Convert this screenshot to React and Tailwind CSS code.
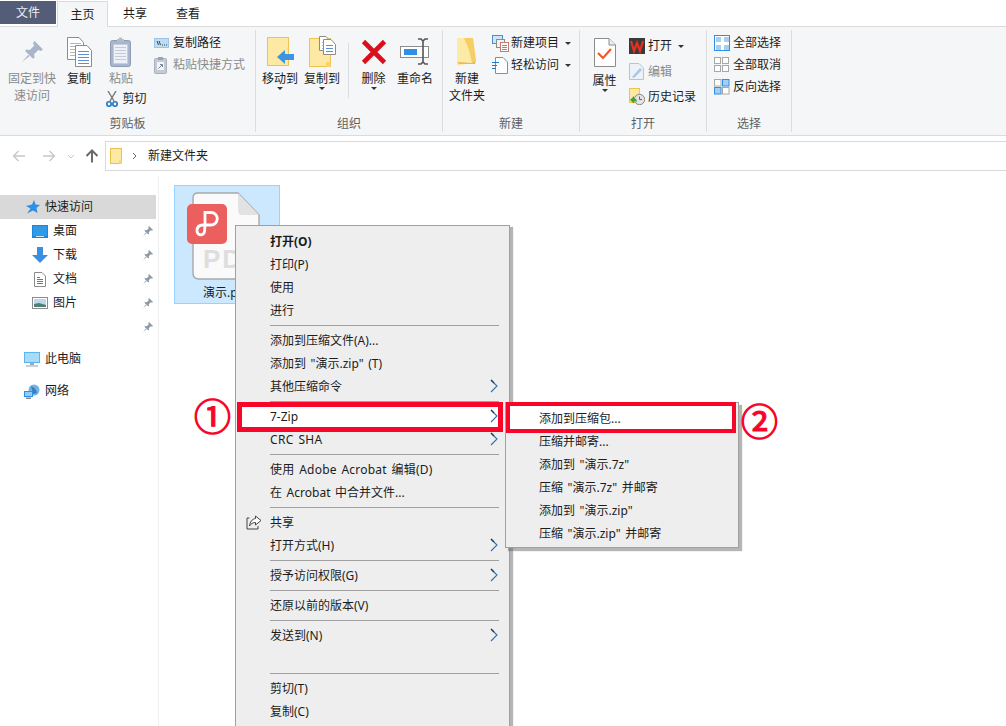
import React from "react";

const Pin = ({ className = "w-[20px] h-[20px]", fill = "#a9b5ca" }) => (
  <svg viewBox="0 0 20 20" className={className}>
    <path d="M12 0 L20 8 L18 9.5 L15.5 8.5 L11.5 12.5 L12 16 L10.5 17 L3 9.5 L4 8 L7.5 8.5 L11.5 4.5 L10.5 2 Z" fill={fill} />
    <path d="M6 13 L0 20 L7 14.5 Z" fill={fill} />
  </svg>
);

const Page = ({ x = 0, y = 0, w = 18, h = 23, lines = "#5b8fd6" }) => (
  <g>
    <path d={`M${x + .5} ${y + .5} H${x + w - 5} L${x + w - .5} ${y + 5.5} V${y + h - .5} H${x + .5} Z`} fill="#fff" stroke="#8c8c8c" />
    {[6, 9, 12, 15, 18].map((d) => d < h - 2 && <path key={d} d={`M${x + 3} ${y + d + .5} H${x + w - 3}`} stroke={lines} />)}
  </g>
);

const CopyIcon = () => (
  <svg width="25" height="30" viewBox="0 0 25 30">
    <Page x={0} y={0} w={17} h={23} lines="#b5b5b5" />
    <Page x={8} y={8} w={17} h={22} />
  </svg>
);

const PasteIcon = () => (
  <svg width="22" height="30" viewBox="0 0 22 30">
    <rect x=".5" y="3.5" width="20" height="26" rx="2" fill="#a9b5ca" stroke="#8f9cb5" />
    <rect x="3.5" y="7.5" width="14" height="19" fill="#eef1f7" stroke="#c5cddd" />
    {[10, 13, 16, 19, 22].map((d) => <path key={d} d={`M5 ${d + .5} H16`} stroke="#c3cbdb" />)}
    <path d="M7 4 V2 H9 V0.5 H12 V2 H14 V4.5 H7 Z" fill="#b5bccb" />
  </svg>
);

const Scissors = () => (
  <svg width="12" height="16" viewBox="0 0 12 16">
    <path d="M2 0 L8 10 M10 0 L4 10" stroke="#777" strokeWidth="1.4" fill="none" />
    <circle cx="3" cy="13" r="2.2" fill="none" stroke="#1e78c8" strokeWidth="1.6" />
    <circle cx="9" cy="13" r="2.2" fill="none" stroke="#1e78c8" strokeWidth="1.6" />
  </svg>
);

const PathIcon = () => (
  <svg width="15" height="10" viewBox="0 0 15 10">
    <rect x=".5" y=".5" width="14" height="9" fill="#bfdcf5" stroke="#9cc4e6" />
    <path d="M3 3 L4.5 7 M5 3 L6.5 7 M8 7 H9 M10 7 H11 M12 7 H13" stroke="#333" strokeWidth=".9" />
  </svg>
);

const ShortcutIcon = () => (
  <svg width="13" height="17" viewBox="0 0 13 17">
    <rect x=".5" y="1.5" width="12" height="15" rx="1" fill="#c3cad6" stroke="#a9b1bf" />
    <rect x="3" y="5" width="7" height="8" fill="#f3f4f6" />
    <path d="M4.5 11.5 L8 8 M6 7.5 H8.5 V10" stroke="#7a8494" fill="none" />
    <rect x="4" y="0" width="5" height="3" fill="#9aa3b2" />
  </svg>
);

const MoveIcon = () => (
  <svg width="27" height="30" viewBox="0 0 27 30">
    <rect x=".5" y=".5" width="21" height="28" fill="#fde9a3" stroke="#ecc44f" />
    <path d="M10 20 L18 13 V17 H27 V23 H18 V27 Z" fill="#3d94e0" />
  </svg>
);

const CopyToIcon = () => (
  <svg width="27" height="31" viewBox="0 0 27 31">
    <rect x=".5" y="2.5" width="21" height="28" fill="#fde9a3" stroke="#ecc44f" />
    <path d="M17 31 V26 H21.5 V31 Z" fill="#f6d56e" />
    <Page x={10} y={0} w={12} h={15} lines="#bbb" />
    <Page x={14} y={3} w={13} h={16} />
  </svg>
);

const DeleteIcon = () => (
  <svg width="26" height="26" viewBox="0 0 26 26">
    <path d="M2.5 2.5 L23.5 23.5 M23.5 2.5 L2.5 23.5" stroke="#d9101c" strokeWidth="4.6" />
  </svg>
);

const RenameIcon = () => (
  <svg width="30" height="27" viewBox="0 0 30 27">
    <rect x=".5" y="8.5" width="28" height="11" fill="#fff" stroke="#8c8c8c" />
    <rect x="4" y="11" width="13" height="6" fill="#2f8fe8" />
    <path d="M18 1 H21 L23 3 L25 1 H28 M23 3 V24 M18 26 H21 L23 24 L25 26 H28" stroke="#555" strokeWidth="1.6" fill="none" />
  </svg>
);

const NewFolderIcon = () => (
  <svg width="20" height="28" viewBox="0 0 20 28">
    <path d="M0 0 H9 L15 3 V25 L0 28 Z" fill="#fdeaa6" />
    <path d="M7 0 H16 L19 22 L15 25 L12 12 Z" fill="#f5cf66" />
    <path d="M0 24 L15 25 L19 22 L18 26 H2 Z" fill="#e6bc4f" />
  </svg>
);

const NewItemIcon = () => (
  <svg width="17" height="17" viewBox="0 0 17 17">
    <rect x=".5" y=".5" width="10" height="8" fill="#cfe5f7" stroke="#4f8fc9" />
    <rect x="4.5" y="4.5" width="8" height="8" fill="#f1f1f1" stroke="#8c8c8c" />
    <rect x="8.5" y="7.5" width="8" height="9" fill="#fff" stroke="#c77b6a" />
    <path d="M10 10.5 H15 M10 12.5 H15 M10 14.5 H15" stroke="#c77b6a" />
  </svg>
);

const EasyIcon = () => (
  <svg width="16" height="17" viewBox="0 0 16 17">
    <path d="M3.5 .5 H11 L15.5 5 V16.5 H3.5 Z" fill="#fff" stroke="#8c8c8c" />
    <path d="M0 5.5 H7 M0 8.5 H5 M0 11.5 H4" stroke="#1e78c8" strokeWidth="1.2" />
  </svg>
);

const PropsIcon = () => (
  <svg width="22" height="29" viewBox="0 0 22 29">
    <path d="M.5 .5 H15 L21.5 7 V28.5 H.5 Z" fill="#fff" stroke="#8c8c8c" />
    <path d="M15 .5 V7 H21.5" fill="#eee" stroke="#8c8c8c" />
    <path d="M4 15 L9 20 L17 11" stroke="#ef5a28" strokeWidth="2.2" fill="none" />
  </svg>
);

const WpsIcon = () => (
  <svg width="16" height="16" viewBox="0 0 16 16">
    <rect width="16" height="16" fill="#3a3a3a" />
    <path d="M2 3 L5 13 L8 5 L11 13 L14 3" stroke="#e8301e" strokeWidth="2.2" fill="none" />
  </svg>
);

const EditIcon = () => (
  <svg width="15" height="17" viewBox="0 0 15 17">
    <path d="M.5 .5 H10 L14.5 5 V16.5 H.5 Z" fill="#eef1f6" stroke="#b9c2d0" />
    <path d="M3 14 L11 5 L13 7 L5 15 Z" fill="#a9c6e6" />
  </svg>
);

const HistoryIcon = () => (
  <svg width="16" height="17" viewBox="0 0 16 17">
    <rect x=".5" y=".5" width="10" height="14" fill="#fde9a3" stroke="#ecc44f" />
    <circle cx="10.5" cy="11.5" r="5.2" fill="#e3e3e3" stroke="#888" />
    <path d="M10.5 8.5 V11.5 H13" stroke="#666" fill="none" />
    <path d="M1 12 L5 8 L5 10.5 C7 10.5 8 12 8 14 C7 13 6 13 5 13 L5 15.5 Z" fill="#3aa53a" />
  </svg>
);

const Grid4 = ({ mode }) => {
  const cells = [[0, 0], [8, 0], [0, 8], [8, 8]];
  return (
    <svg width="16" height="16" viewBox="0 0 16 16">
      {mode === "all" && <rect x=".5" y=".5" width="15" height="15" fill="#fff" stroke="#2f8fe8" />}
      {cells.map(([x, y], i) => {
        if (mode === "all") return <rect key={i} x={x + 2} y={y + 2} width="5" height="5" fill="#a6cef0" />;
        if (mode === "none") return <rect key={i} x={x + .5} y={y + .5} width="6" height="6" fill="#fff" stroke="#a8a8a8" />;
        const on = i === 1 || i === 2;
        return <rect key={i} x={x + .5} y={y + .5} width="6.5" height="6.5" fill={on ? "#a6cef0" : "#fff"} stroke={on ? "#2f8fe8" : "#a8a8a8"} />;
      })}
    </svg>
  );
};

const Caret = () => <span className="block w-0 h-0 border-x-[3px] border-x-transparent border-t-[3px] border-t-[#333]" />;

const Big = ({ w, icon, label, label2, caret, dim, ih = "h-[37px]" }) => (
  <div className={`${w} flex flex-col items-center shrink-0`}>
    <div className={`${ih} flex items-center justify-center`}>{icon}</div>
    <div className={`leading-[17px] text-center whitespace-nowrap ${dim ? "text-[#8a8a8a]" : ""}`}>{label}</div>
    {label2 && <div className={`leading-[17px] text-center whitespace-nowrap ${dim ? "text-[#8a8a8a]" : ""}`}>{label2}</div>}
    {caret && <div><Caret /></div>}
  </div>
);

const Small = ({ icon, label, caret, dim, h = "h-[22px]", iw = "w-[19px]" }) => (
  <div className={`${h} flex items-center whitespace-nowrap`}>
    <div className={`${iw} flex items-center shrink-0`}>{icon}</div>
    <span className={dim ? "text-[#8a8a8a]" : ""}>{label}</span>
    {caret && <span className="ml-[6px]"><Caret /></span>}
  </div>
);

const Group = ({ w, label, children }) => (
  <div className={`${w} shrink-0 h-[102px] flex flex-col border-r border-[#dcdddf]`}>
    <div className="flex-1 flex items-start pt-[3px]">{children}</div>
    <div className="h-[18px] leading-[20px] text-center text-[#5f5f5f]">{label}</div>
  </div>
);

const Ribbon = () => (
  <div className="h-[109px] bg-[#f5f6f7] border-b border-[#dadbdc] pt-[3px] flex">
    <Group w="w-[256px]" label="剪贴板">
      <div className="w-[6px]" />
      <Big w="w-[52px]" dim icon={<Pin className="w-[21px] h-[21px]" />} label="固定到快" label2="速访问" />
      <Big w="w-[42px]" icon={<CopyIcon />} label="复制" />
      <div className="w-[42px] flex flex-col items-center">
        <Big w="w-[42px]" dim icon={<PasteIcon />} label="粘贴" />
        <div className="flex items-center gap-[5px] h-[17px] mt-[3px] whitespace-nowrap ml-[10px]"><Scissors /><span>剪切</span></div>
      </div>
      <div className="ml-[12px] -mt-[1px] flex flex-col">
        <Small icon={<PathIcon />} label="复制路径" />
        <Small dim icon={<ShortcutIcon />} label="粘贴快捷方式" />
      </div>
    </Group>
    <Group w="w-[187px]" label="组织">
      <div className="w-[3px]" />
      <Big w="w-[42px]" icon={<MoveIcon />} label="移动到" caret />
      <Big w="w-[42px]" icon={<CopyToIcon />} label="复制到" caret />
      <div className="w-px h-[55px] mt-[10px] ml-[5px] mr-[4px] bg-[#dcdddf] shrink-0" />
      <Big w="w-[41px]" icon={<DeleteIcon />} label="删除" caret />
      <Big w="w-[42px]" icon={<RenameIcon />} label="重命名" />
    </Group>
    <Group w="w-[137px]" label="新建">
      <div className="w-[1px]" />
      <Big w="w-[46px]" icon={<NewFolderIcon />} label="新建" label2="文件夹" />
      <div className="ml-[2px] -mt-[1px] flex flex-col">
        <Small icon={<NewItemIcon />} label="新建项目" caret />
        <Small icon={<EasyIcon />} label="轻松访问" caret />
      </div>
    </Group>
    <Group w="w-[127px]" label="打开">
      <Big w="w-[49px]" ih="h-[39px]" icon={<PropsIcon />} label="属性" caret />
      <div className="flex flex-col">
        <Small h="h-[26px]" icon={<WpsIcon />} label="打开" caret />
        <Small h="h-[25px]" dim icon={<EditIcon />} label="编辑" />
        <Small h="h-[25px]" icon={<HistoryIcon />} label="历史记录" />
      </div>
    </Group>
    <Group w="w-[85px]" label="选择">
      <div className="ml-[7px] -mt-[1px] flex flex-col">
        <Small icon={<Grid4 mode="all" />} label="全部选择" />
        <Small icon={<Grid4 mode="none" />} label="全部取消" />
        <Small icon={<Grid4 mode="inv" />} label="反向选择" />
      </div>
    </Group>
  </div>
);

const Tabs = () => (
  <div className="h-[27px] flex border-b border-[#dadbdc] pt-px">
    <div className="w-[56px] h-[23px] bg-[#535d77] text-[#eceef3] flex items-center justify-center">文件</div>
    <div className="w-[51px] h-[26px] ml-px bg-[#f5f6f7] border-x border-t border-[#dadbdc] flex items-center justify-center">主页</div>
    <div className="w-[54px] h-[25px] flex items-center justify-center">共享</div>
    <div className="w-[52px] h-[25px] flex items-center justify-center">查看</div>
  </div>
);

const Arrow = ({ color, flip, sw = 1.4 }) => (
  <svg width="14" height="12" viewBox="0 0 14 12" className={flip ? "rotate-180" : ""}>
    <path d="M13 6 H1.5 M6.5 1 L1.5 6 L6.5 11" stroke={color} strokeWidth={sw} fill="none" />
  </svg>
);

const AddressBar = () => (
  <div className="h-[40px] flex items-center pl-[12px] pr-0">
    <Arrow color="#c8c8c8" />
    <div className="w-[16px]" />
    <Arrow color="#c8c8c8" flip />
    <svg width="8" height="5" viewBox="0 0 8 5" className="ml-[11px] shrink-0"><path d="M1 1 L4 4 L7 1" stroke="#c8c8c8" fill="none" /></svg>
    <svg width="14" height="14" viewBox="0 0 14 14" className="ml-[10px] shrink-0"><path d="M7 13.5 V1.5 M1.5 7 L7 1.5 L12.5 7" stroke="#6a6a6a" strokeWidth="2" fill="none" /></svg>
    <div className="ml-[6px] flex-1 h-[30px] border-y border-l border-[#d9d9d9] flex items-center pl-[4px]">
      <svg width="13" height="17" viewBox="0 0 13 17"><rect x=".5" y=".5" width="11" height="15" fill="#fde9a3" stroke="#e8c24a" /><path d="M9 16 V12.5 H12 V16 Z" fill="#f6d56e" /></svg>
      <svg width="6" height="8" viewBox="0 0 6 8" className="ml-[9px]"><path d="M1 1 L4 4 L1 7" stroke="#666" fill="none" /></svg>
      <span className="ml-[10px]">新建文件夹</span>
    </div>
  </div>
);

const StarIcon = () => (
  <svg width="14" height="14" viewBox="0 0 14 14">
    <path d="M8 0 L9.5 4.5 L14 5 L10.5 8 L11.5 13 L7 10.5 L1 13.5 L4.5 8.5 L0 6 L6 4.5 Z" fill="#2f8fe8" />
  </svg>
);
const DesktopIcon = () => (
  <svg width="16" height="13" viewBox="0 0 16 13"><rect width="16" height="13" fill="#1a86dc" /><rect x="1" y="1" width="14" height="10" fill="#2f9be8" /><path d="M4 11.5 H12" stroke="#cfe5f7" /></svg>
);
const DownIcon = () => (
  <svg width="16" height="16" viewBox="0 0 16 16"><path d="M5 0 H11 V8 H16 L8 16 L0 8 H5 Z" fill="#3a8fe0" /></svg>
);
const DocIcon = () => (
  <svg width="12" height="15" viewBox="0 0 12 15"><path d="M.5 .5 H8 L11.5 4 V14.5 H.5 Z" fill="#fff" stroke="#8c8c8c" /><path d="M3 5.5 H6 M3 7.5 H9 M3 9.5 H9 M3 11.5 H9" stroke="#3a8a9a" /></svg>
);
const PicIcon = () => (
  <svg width="16" height="12" viewBox="0 0 16 12"><rect x=".5" y=".5" width="15" height="11" fill="#fff" stroke="#8c8c8c" /><rect x="2" y="2" width="12" height="8" fill="#bcd8ea" /><path d="M2 10 L2 7 L7 6 L14 8 V10 Z" fill="#4f7f78" /></svg>
);
const PcIcon = () => (
  <svg width="16" height="15" viewBox="0 0 16 15"><rect width="16" height="11" fill="#5cb4ec" /><rect x="1" y="1" width="14" height="9" fill="#a6dcf8" /><rect x="6" y="11" width="4" height="2" fill="#9aa9b5" /><rect x="2" y="13" width="12" height="2" fill="#c7d0d8" /></svg>
);
const NetIcon = () => (
  <svg width="16" height="15" viewBox="0 0 16 15"><circle cx="10" cy="6" r="5.5" fill="#6fb4e8" /><path d="M7 2 C10 3 12 5 13 9 L9 10 Z" fill="#3c7db8" /><rect y="7" width="9" height="6" fill="#2f8fe8" /><rect x="1" y="8" width="7" height="4" fill="#8fcdf2" /><rect x="2" y="13.5" width="5" height="1.5" fill="#888" /></svg>
);

const NavItem = ({ icon, label }) => (
  <div className="h-[24px] flex items-center relative">
    <div className="w-[48px] pl-[32px] flex items-center justify-center shrink-0">{icon}</div>
    <span className="ml-[5px]">{label}</span>
    <div className="ml-auto mr-[5px]"><Pin className="w-[10px] h-[10px]" fill="#8f99a6" /></div>
  </div>
);

const Sidebar = () => (
  <div className="w-[159px] shrink-0 h-full border-r border-[#f0f0f0] pt-[19px]">
    <div className="w-[156px] h-[24px] bg-[#d9d9d9] flex items-center pl-[26px] gap-[5px]"><StarIcon /><span>快速访问</span></div>
    <div className="w-[158px] mt-[-1px] pt-px">
      <NavItem icon={<DesktopIcon />} label="桌面" />
      <NavItem icon={<DownIcon />} label="下载" />
      <NavItem icon={<DocIcon />} label="文档" />
      <NavItem icon={<PicIcon />} label="图片" />
      <NavItem label="" />
    </div>
    <div className="h-[24px] mt-[8px] flex items-center pl-[24px] gap-[5px]"><PcIcon /><span>此电脑</span></div>
    <div className="h-[24px] mt-[8px] flex items-center pl-[24px] gap-[5px]"><NetIcon /><span>网络</span></div>
  </div>
);

const FileTile = () => (
  <div className="ml-[15px] mt-[9px] w-[106px] h-[119px] bg-[#cce8ff] border border-[#99d1ff] relative flex flex-col items-center">
    <svg width="68" height="88" viewBox="0 0 68 88" className="mt-[6px] ml-[17px] self-start">
      <path d="M6 1 H46 L67 23 V81 Q67 87 61 87 H7 Q1 87 1 81 V6 Q1 1 6 1 Z" fill="#fafafa" stroke="#a8a8a8" strokeWidth="1.4" />
      <path d="M46 1 L67 23 H50 Q46 23 46 18 Z" fill="#e2e2e2" />
    </svg>
    <div className="absolute left-[12px] top-[18px] w-[40px] h-[40px] rounded-[5px] bg-[#ec5f5f] flex items-center justify-center">
      <svg width="24" height="28" viewBox="0 0 24 28">
        <path d="M10 15 V2.5 H16 A6.2 6.2 0 0 1 16 15 H8 C4 15 2 17.5 2 21 A3.8 3.8 0 0 0 9.6 21 C9.6 19 10 17 10 15" stroke="#fff" strokeWidth="2.8" fill="none" />
      </svg>
    </div>
    <div className="absolute left-[28px] top-[58px] text-[26px] leading-[30px] font-bold text-[#dedede] tracking-[2px] font-['Liberation_Sans',sans-serif]">PD</div>
    <div className="absolute left-[28px] top-[99px] whitespace-nowrap">演示.pdf</div>
  </div>
);

const Chevron = () => (
  <svg width="8" height="14" viewBox="0 0 8 14" className="absolute right-[11px] top-[4px]">
    <path d="M1 1 L7 7 L1 13" stroke="#2f6fb5" strokeWidth="1.1" fill="none" />
    <path d="M1 1 L4 4" stroke="#333" strokeWidth="1.1" fill="none" />
  </svg>
);

const Row = ({ label, sub, bold, icon, children, cls = "" }) => (
  <div className={`relative isolate h-[23px] flex items-center pl-[34px] whitespace-nowrap ${bold ? "font-bold" : ""} ${cls}`}>
    {children}
    {icon && <div className="absolute left-[10px] top-[4px]">{icon}</div>}
    <span className="relative">{label}</span>
    {sub && <Chevron />}
  </div>
);

const Sep = () => <div className="h-[7px] flex items-center pl-[34px] pr-[10px]"><div className="h-px w-full bg-[#a0a0a0]" /></div>;

const ShareIcon = () => (
  <svg width="16" height="15" viewBox="0 0 16 15">
    <path d="M3.5 3 H1 V14 H12 V11" stroke="#444" fill="none" />
    <path d="M9.5 1 L15 5.5 L9.5 10 V7.5 C7 7.5 5 8.5 3.5 11 C4 7 6 4 9.5 3.5 Z" stroke="#444" fill="#fff" />
  </svg>
);

const SubMenu = () => (
  <div className="absolute left-[505px] top-[402px] w-[234px] h-[146px] bg-[#eeeeee] border border-[#a0a0a0] shadow-[3px_3px_1px_rgba(90,90,90,0.45)] pt-[4px] [word-spacing:1.5px]">
    <div className="relative isolate h-[23px] flex items-center pl-[33px] whitespace-nowrap">
      <div className="absolute -z-10 left-0 -top-[5px] w-[230px] h-[31px] bg-white border-[4px] border-[#f8062a]" />
      <span>添加到压缩包...</span>
    </div>
    {['压缩并邮寄...', '添加到 "演示.7z"', '压缩 "演示.7z" 并邮寄', '添加到 "演示.zip"', '压缩 "演示.zip" 并邮寄'].map((t) => (
      <div key={t} className="h-[23px] flex items-center pl-[33px] whitespace-nowrap">{t}</div>
    ))}
  </div>
);

const ContextMenu = () => (
  <div className="absolute left-[235px] top-[225px] w-[275px] h-[501px] bg-[#eeeeee] border-x border-t border-[#a0a0a0] shadow-[3px_2px_1px_rgba(90,90,90,0.45)] pt-[4px] [word-spacing:1.5px]">
    <Row label="打开(O)" bold />
    <Row label="打印(P)" />
    <Row label="使用" />
    <Row label="进行" />
    <Sep />
    <Row label="添加到压缩文件(A)..." />
    <Row label='添加到 "演示.zip" (T)' />
    <Row label="其他压缩命令" sub />
    <Sep />
    <Row label="7-Zip" sub>
      <div className="absolute -z-10 left-[1px] -top-[3px] w-[266px] h-[30px] bg-white border-[5px] border-[#f8062a]" />
    </Row>
    <Row label="CRC SHA" sub cls="tracking-[0.3px]" />
    <Sep />
    <Row label="使用 Adobe Acrobat 编辑(D)" cls="tracking-[0.2px]" />
    <Row label="在 Acrobat 中合并文件..." />
    <Sep />
    <Row label="共享" icon={<ShareIcon />} />
    <Row label="打开方式(H)" sub />
    <Sep />
    <Row label="授予访问权限(G)" sub />
    <Sep />
    <Row label="还原以前的版本(V)" />
    <Sep />
    <Row label="发送到(N)" sub />
    <Row label="" />
    <Sep />
    <Row label="剪切(T)" />
    <Row label="复制(C)" />
  </div>
);

const Circled = ({ cls, children }) => (
  <div className={`absolute text-[37px] leading-[37px] text-[#f8062a] [-webkit-text-stroke:1.2px_#f8062a] font-['Noto_Sans_CJK_SC',sans-serif] ${cls}`}>{children}</div>
);

export default function App() {
  return (
    <div className="relative w-[1006px] h-[726px] overflow-hidden bg-white text-[12px] leading-[16px] text-[#1c1c1c] font-['Noto_Sans','Noto_Sans_CJK_SC',sans-serif]">
      <Tabs />
      <Ribbon />
      <AddressBar />
      <div className="flex h-[550px]">
        <Sidebar />
        <FileTile />
      </div>
      <ContextMenu />
      <SubMenu />
      <Circled cls="left-[194px] top-[397px]">①</Circled>
      <Circled cls="left-[741px] top-[402px]">②</Circled>
    </div>
  );
}
